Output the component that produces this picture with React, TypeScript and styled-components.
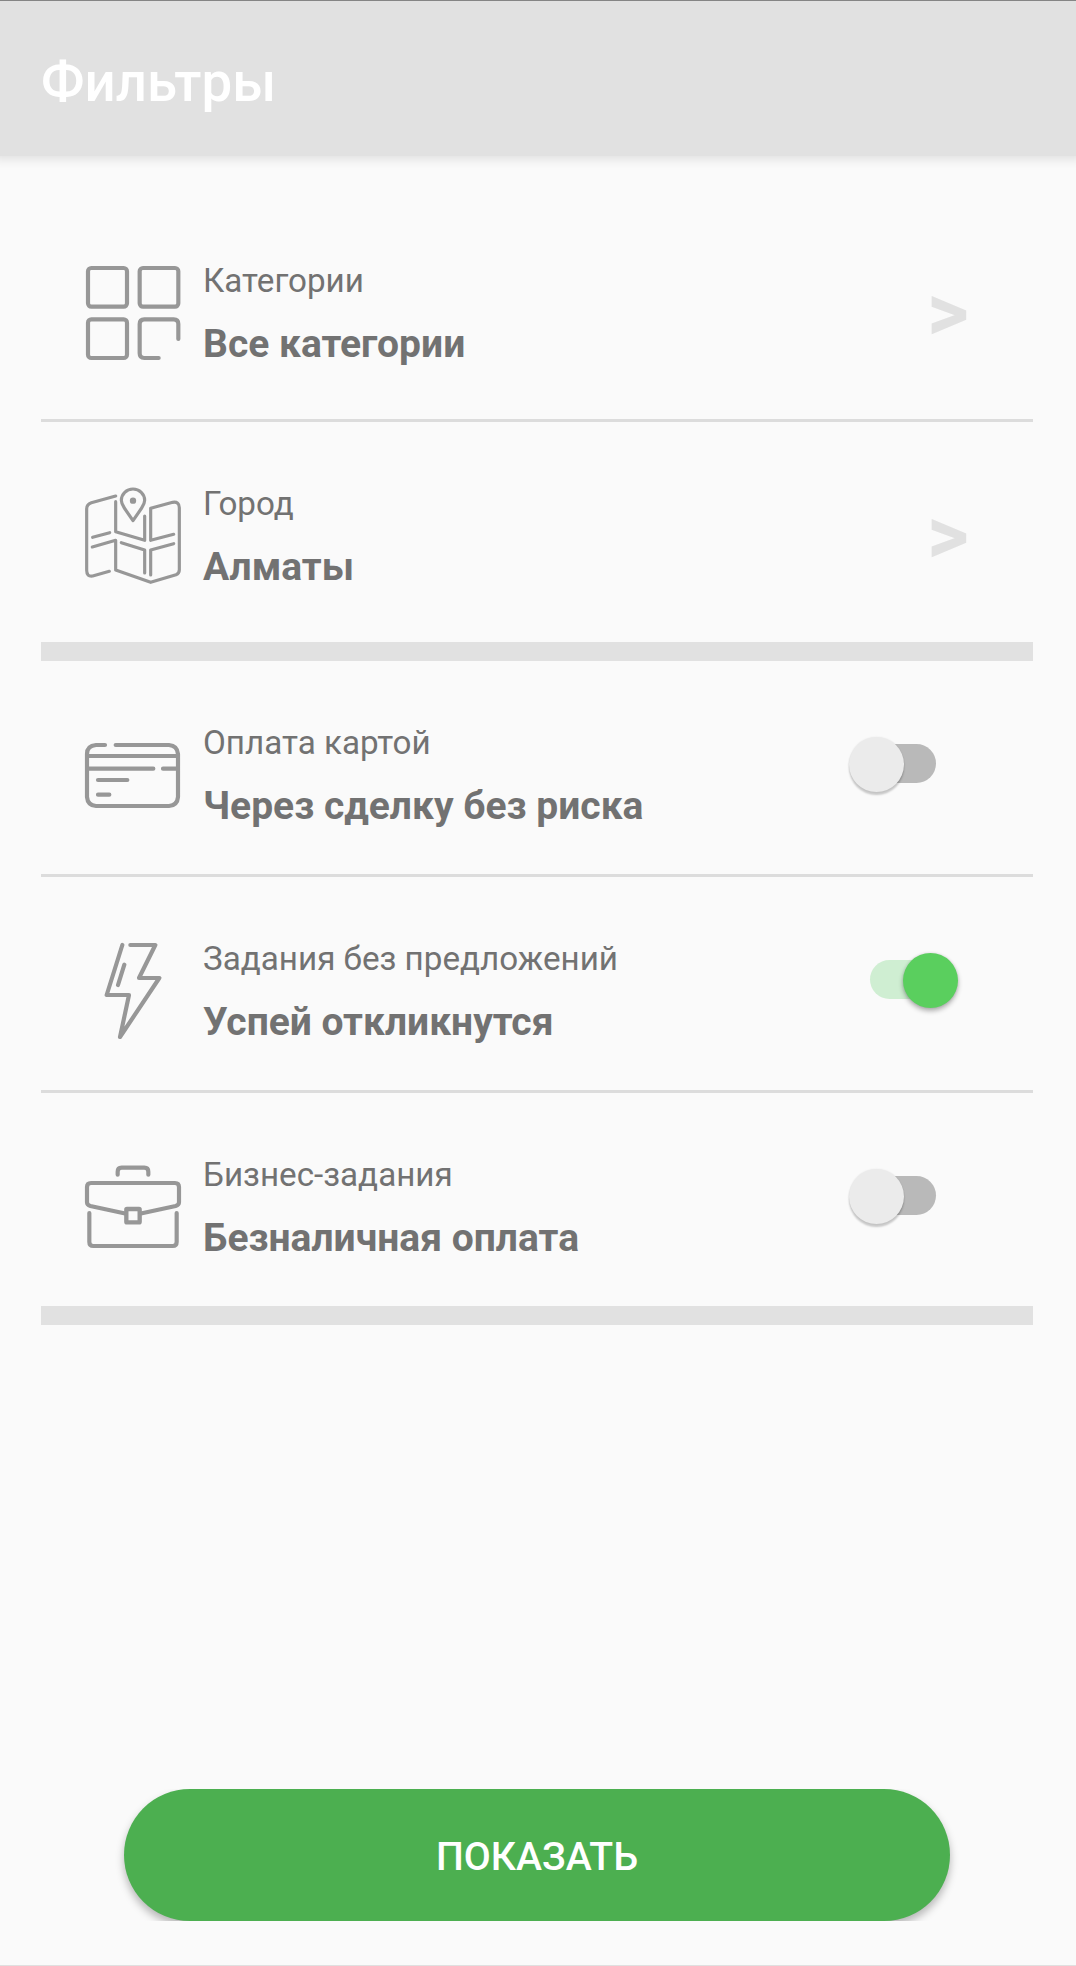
import React, { useState } from "react";
import styled, { createGlobalStyle } from "styled-components";

const GlobalStyle = createGlobalStyle`
  body {
    margin: 0;
    background: #fafafa;
    font-family: Roboto, sans-serif;
  }
  *, *::before, *::after { box-sizing: border-box; }
`;

const Screen = styled.div`
  display: flex;
  flex-direction: column;
  height: 1966px;
  background: #fafafa;
  border-bottom: 1px solid #e0e0e0;
  overflow: hidden;
`;

const AppBar = styled.header`
  display: flex;
  align-items: center;
  flex: none;
  height: 156px;
  padding: 6px 41px 0;
  background: #e1e1e1;
  border-top: 1px solid #858585;
  box-shadow: 0 -6px 10px 9px rgba(0, 0, 0, 0.11);
`;

const Title = styled.h1`
  margin: 0;
  color: #fff;
  font-size: 54.6px;
  line-height: 64px;
  font-weight: 500;
`;

const List = styled.main`
  display: flex;
  flex-direction: column;
  flex: 1;
  margin: 43px 43px 0 41px;
`;

const Row = styled.section<{ $height: number; $edge: "thin" | "thick" }>`
  display: flex;
  align-items: flex-start;
  flex: none;
  height: ${(p) => p.$height + (p.$edge === "thick" ? 19 : 3)}px;
  border-bottom: ${(p) => (p.$edge === "thick" ? "19px solid #e1e1e1" : "3px solid #dcdcdc")};
`;

const Icon = styled.svg`
  flex: none;
  width: 96px;
  height: 96px;
  margin: 66px 22px 0 44px;
  fill: none;
  stroke: #979797;
  stroke-width: 12.5;
  stroke-linecap: round;
  stroke-linejoin: round;
  overflow: visible;
`;

const Texts = styled.div`
  display: flex;
  flex-direction: column;
  gap: 22px;
  flex: 1;
  padding-top: 62px;
  color: #727272;
`;

const Caption = styled.span`
  font-size: 33.2px;
  line-height: 39px;
`;

const Value = styled.span`
  font-size: 39px;
  line-height: 45px;
  font-weight: 700;
`;

const Chevron = styled.span`
  width: 44px;
  margin: 69px 62px 0 0;
  color: #e1e1e1;
  font-size: 81px;
  line-height: 90px;
  font-weight: 700;
`;

const Track = styled.button<{ $on: boolean }>`
  display: flex;
  align-items: center;
  justify-content: ${(p) => (p.$on ? "flex-end" : "flex-start")};
  flex: none;
  width: 66px;
  height: 39px;
  margin: 83px 97px 0 0;
  padding: 0;
  border: 0;
  border-radius: 20px;
  background: ${(p) => (p.$on ? "#cfeed2" : "#b9b9b9")};
`;

const Thumb = styled.span<{ $on: boolean }>`
  flex: none;
  width: 55px;
  height: 55px;
  margin: 1px -21.5px 0;
  border-radius: 50%;
  background: ${(p) => (p.$on ? "#5acf5e" : "#ebebeb")};
  box-shadow: ${(p) =>
    p.$on
      ? "0 3px 5px rgba(0,0,0,.3), 0 0 3px rgba(0,0,0,.1)"
      : "0 3px 2px rgba(0,0,0,.2), 0 0 2px rgba(0,0,0,.08)"};
`;

const Footer = styled.footer`
  flex: none;
  height: 132px;
  margin-bottom: 44px;
  padding: 0 126px 0 124px;
  overflow-x: clip;
  overflow-y: clip;
`;

const ShowButton = styled.button`
  display: flex;
  align-items: center;
  justify-content: center;
  width: 100%;
  height: 132px;
  padding: 5px 0 0;
  border: 0;
  border-radius: 66px;
  background: #4caf50;
  box-shadow: 0 5px 8px rgba(0, 0, 0, 0.28);
  color: #fff;
  font: 500 39.2px/45px Roboto, sans-serif;
`;

const CategoriesIcon = () => (
  <Icon viewBox="45 45 288 288">
    <rect x="54" y="54" width="117" height="116" rx="10" />
    <rect x="209" y="54" width="116" height="116" rx="10" />
    <rect x="54" y="208" width="117" height="116" rx="10" />
    <path d="M325 267V222Q325 208 311 208H223Q209 208 209 222V310Q209 324 223 324H266" />
  </Icon>
);

const MapIcon = () => (
  <Icon viewBox="45 39 288 288">
    <g strokeWidth="9.5">
      <path d="M137 63L64 83Q50 88 50 101V286Q50 306 68 303L118 289" />
      <path d="M137 80V170L224 196V123M242 300V225L311 206M242 196V100L308 82Q328 79 328 98V284Q328 295 318 299L242 322L137 285V196L67 216M68 187L119 173M242 196L311 178M154 203L224 225V294" />
      <path d="M189 137L163 99Q154 86 154 76A35 34 0 0 1 224 76Q224 86 215 99Z" />
    </g>
    <circle cx="189" cy="77" r="9.5" fill="#979797" stroke="none" />
  </Icon>
);

const CardIcon = () => (
  <Icon viewBox="45 6 288 288">
    <path d="M105 60H78Q51 62 51 87V216Q53 241 78 243H297Q322 241 324 216V87Q322 62 297 60H137M54 93H322M54 131H250M279 131H322M84 165H172M84 209H118" />
  </Icon>
);

const BoltIcon = () => (
  <Icon viewBox="-15 39 288 288">
    <path d="M97 45L50 195H117L90 321L208 144H147L196 45H121M103 104L84 165" />
  </Icon>
);

const BriefcaseIcon = () => (
  <Icon viewBox="45 12 288 288">
    <path d="M143 59V50Q143 38 155 38H223Q235 38 235 50V59M162 175L61 153Q51 150 51 142V96Q51 84 63 84H315Q327 84 327 96V142Q327 150 317 153L216 175M58 174V261Q58 273 70 273H308Q320 273 320 261V174" />
    <rect x="169" y="162" width="40" height="40" rx="2" strokeWidth="13" />
  </Icon>
);

function Switch({ initial = false }: { initial?: boolean }) {
  const [on, setOn] = useState(initial);
  return (
    <Track role="switch" aria-checked={on} $on={on} onClick={() => setOn(!on)}>
      <Thumb $on={on} />
    </Track>
  );
}

type ItemProps = {
  icon: React.ReactNode;
  caption: string;
  value: string;
  height: number;
  edge?: "thin" | "thick";
  children: React.ReactNode;
};

function Item({ icon, caption, value, height, edge = "thin", children }: ItemProps) {
  return (
    <Row $height={height} $edge={edge}>
      {icon}
      <Texts>
        <Caption>{caption}</Caption>
        <Value>{value}</Value>
      </Texts>
      {children}
    </Row>
  );
}

export default function App() {
  return (
    <>
      <GlobalStyle />
      <Screen>
        <AppBar>
          <Title>Фильтры</Title>
        </AppBar>
        <List>
          <Item icon={<CategoriesIcon />} caption="Категории" value="Все категории" height={220}>
            <Chevron>&gt;</Chevron>
          </Item>
          <Item icon={<MapIcon />} caption="Город" value="Алматы" height={220} edge="thick">
            <Chevron>&gt;</Chevron>
          </Item>
          <Item icon={<CardIcon />} caption="Оплата картой" value="Через сделку без риска" height={213}>
            <Switch />
          </Item>
          <Item icon={<BoltIcon />} caption="Задания без предложений" value="Успей откликнутся" height={213}>
            <Switch initial />
          </Item>
          <Item icon={<BriefcaseIcon />} caption="Бизнес-задания" value="Безналичная оплата" height={213} edge="thick">
            <Switch />
          </Item>
        </List>
        <Footer>
          <ShowButton>ПОКАЗАТЬ</ShowButton>
        </Footer>
      </Screen>
    </>
  );
}
